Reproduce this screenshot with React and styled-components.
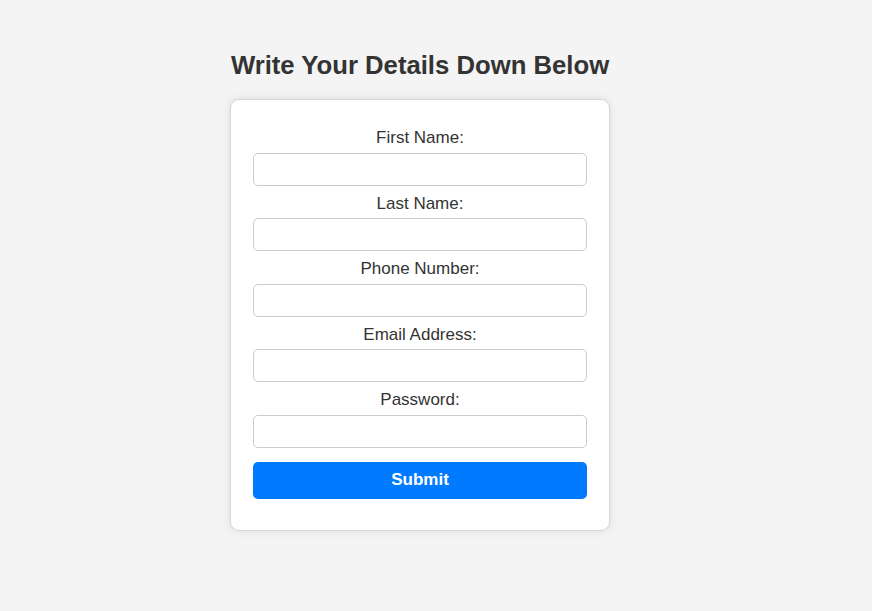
import React from 'react';
import styled, { createGlobalStyle } from 'styled-components';

const GlobalStyle = createGlobalStyle`
  html, body {
    margin: 0;
    padding: 0;
    background: #f4f4f4;
    font-family: "Liberation Sans", Arial, sans-serif;
  }
`;

const Page = styled.div`
  display: flex;
  flex-direction: column;
  align-items: center;
  padding: 48px 32px 0 0;
  min-height: 611px;
  box-sizing: border-box;
`;

const Heading = styled.h2`
  margin: 0 0 17px;
  font-size: 25.7px;
  font-weight: bold;
  color: #333;
  line-height: 34px;
`;

const Card = styled.form`
  width: 380px;
  box-sizing: border-box;
  background: #fff;
  border: 1px solid #d6d6d6;
  border-radius: 9px;
  box-shadow: 0 0 10px rgba(0, 0, 0, 0.1);
  padding: 28px 22px 31px;
  display: flex;
  flex-direction: column;
`;

const Group = styled.div`
  display: flex;
  flex-direction: column;
  align-items: center;
  margin-bottom: 8px;
`;

const Label = styled.label`
  font-size: 17px;
  line-height: 19.5px;
  color: #333;
  margin-bottom: 5px;
`;

const Input = styled.input`
  width: 100%;
  height: 33px;
  box-sizing: border-box;
  border: 1px solid #ccc;
  border-radius: 5px;
  padding: 8px;
  font-size: 16px;
  background: #fff;
`;

const Button = styled.button`
  width: 100%;
  height: 37px;
  margin-top: 6px;
  border: none;
  border-radius: 5px;
  background: #007bff;
  color: #fff;
  font-family: "Liberation Sans", Arial, sans-serif;
  font-weight: bold;
  font-size: 17px;
  cursor: pointer;
`;

const fields = [
  { id: 'first', label: 'First Name:', type: 'text' },
  { id: 'last', label: 'Last Name:', type: 'text' },
  { id: 'phone', label: 'Phone Number:', type: 'tel' },
  { id: 'email', label: 'Email Address:', type: 'email' },
  { id: 'password', label: 'Password:', type: 'password' },
];

export default function App() {
  return (
    <>
      <GlobalStyle />
      <Page>
        <Heading>Write Your Details Down Below</Heading>
        <Card onSubmit={e => e.preventDefault()}>
          {fields.map(f => (
            <Group key={f.id}>
              <Label htmlFor={f.id}>{f.label}</Label>
              <Input id={f.id} name={f.id} type={f.type} />
            </Group>
          ))}
          <Button type="submit">Submit</Button>
        </Card>
      </Page>
    </>
  );
}
